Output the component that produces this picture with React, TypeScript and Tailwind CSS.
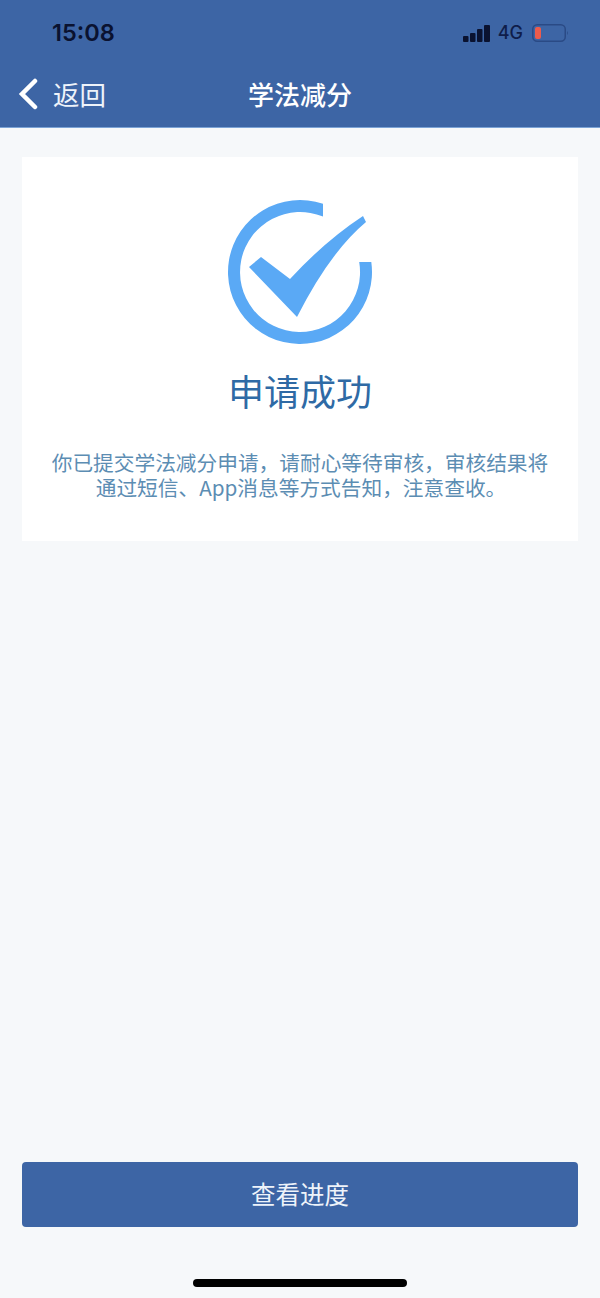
const cjk = "font-['Noto_Sans_CJK_SC','Noto_Sans',sans-serif]";

function StatusBar() {
  return (
    <div className="flex h-[66px] items-center justify-between pl-[52px] pr-[32px]">
      <span className="font-['Inter',sans-serif] text-[23.5px] font-semibold leading-none text-[#0a1230]">15:08</span>
      <div className="flex items-center">
        <svg width="27" height="17" viewBox="0 0 27 17" className="mr-[8px]" fill="#0a1230">
          <rect x="0" y="11" width="5.5" height="6" rx="1" />
          <rect x="7" y="8" width="5.5" height="9" rx="1" />
          <rect x="14" y="4" width="5.5" height="13" rx="1" />
          <rect x="21" y="0" width="6" height="17" rx="1" />
        </svg>
        <span className="mr-[9px] font-['Inter',sans-serif] text-[18px] font-medium leading-none text-[#0f1d4a]">4G</span>
        <svg width="36" height="18" viewBox="0 0 36 18">
          <rect x="0.75" y="0.75" width="32.5" height="16.5" rx="4.5" fill="none" stroke="#2a4a85" strokeWidth="1.5" />
          <rect x="3" y="3" width="6" height="12" rx="2" fill="#ec5b4c" />
          <path d="M35 7 Q36.5 9 35 11 Z" fill="#2a4a85" />
        </svg>
      </div>
    </div>
  );
}

function NavBar() {
  return (
    <div className="grid h-[56px] grid-cols-[1fr_auto_1fr] items-center text-white">
      <div className="flex items-center pl-[18px]">
        <svg width="20" height="32" viewBox="0 0 20 32" fill="none" stroke="#ffffff" strokeWidth="4.5" strokeLinecap="round" strokeLinejoin="miter">
          <path d="M17 3 L4 16 L17 29" />
        </svg>
        <span className="ml-[15px] text-[26.5px] leading-none text-[#eef3fa]">返回</span>
      </div>
      <span className="text-[26px] font-medium leading-none">学法减分</span>
      <div />
    </div>
  );
}

function SuccessIcon() {
  return (
    <svg width="160" height="160" viewBox="220 192 160 160" fill="#5aa9f5">
      <path d="M323 203.8 A72 72 0 1 0 371.3 262 L359.2 262 A60 60 0 1 1 323 216.6 Z" />
      <path d="M249 267 L261 257 L290 279 Q325 241 363 216 L366 222 Q330 252 297 317 Z" />
    </svg>
  );
}

export default function App() {
  return (
    <div className={`flex h-[1298px] w-[600px] flex-col overflow-hidden bg-[#f6f8fa] ${cjk}`}>
      <header className="h-[128px] border-b border-[#7ba3d6] bg-[#3d65a5]">
        <StatusBar />
        <NavBar />
      </header>

      <main className="flex flex-1 flex-col px-[22px] pt-[29px]">
        <section className="flex h-[384px] flex-col items-center bg-white pt-[35px]">
          <SuccessIcon />
          <h1 className="mt-[13px] text-[36px] leading-[50px] text-[#2f6aa5]">申请成功</h1>
          <p className="mt-[35px] w-[510px] text-center text-[20.7px] leading-[25px] text-[#5c8db3]">
            你已提交学法减分申请，请耐心等待审核，审核结果将
            <span className="block pl-[2px]">通过短信、App消息等方式告知，注意查收。</span>
          </p>
        </section>
      </main>

      <div className="flex flex-col items-center px-[22px] pb-[11px]">
        <button className="h-[65px] w-full rounded-[4px] bg-[#3d65a5] text-[24.5px] text-[#eef3fa]">查看进度</button>
        <div className="mt-[52px] h-[8px] w-[214px] rounded-full bg-black" />
      </div>
    </div>
  );
}
